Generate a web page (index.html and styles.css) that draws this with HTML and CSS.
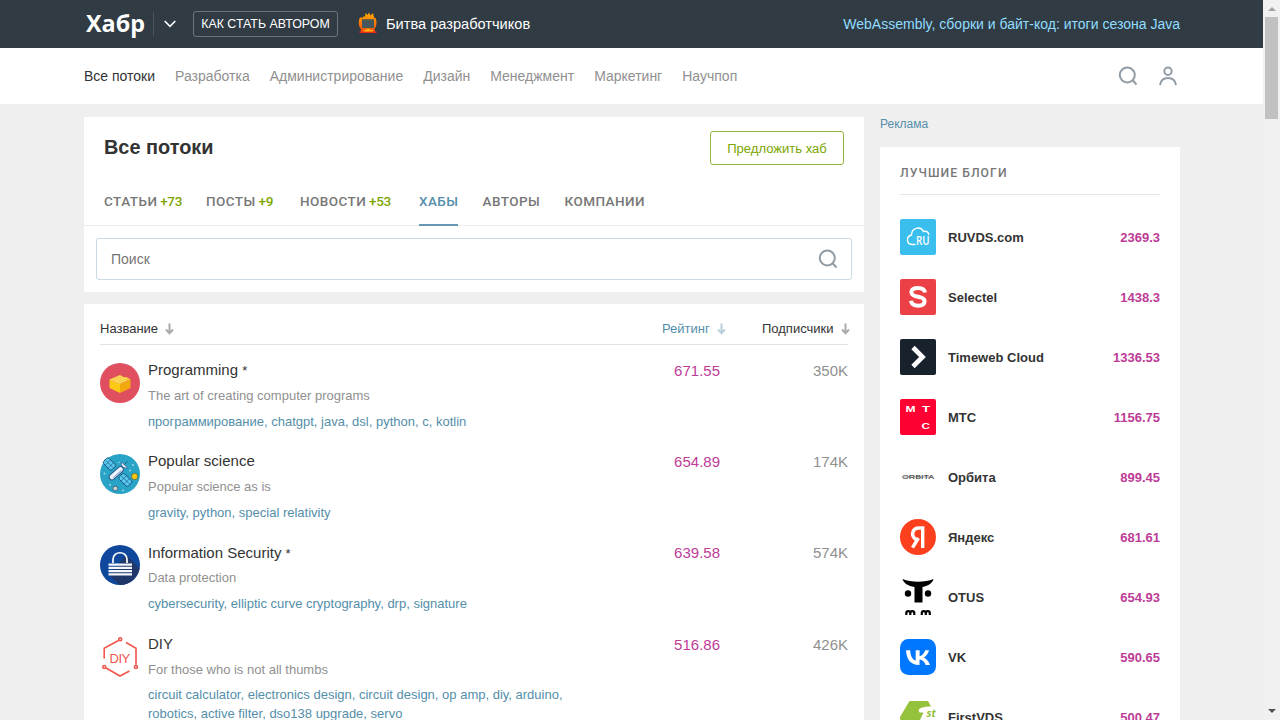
FILE: index.html
```html
<!DOCTYPE html>
<html lang="ru">
<head>
<meta charset="utf-8">
<title>Хабы / Хабр</title>
<link rel="stylesheet" href="styles.css">
</head>
<body>
<div class="window">
<div class="page">
  <header class="topbar">
    <div class="wrap topbar-in">
      <svg class="brand" width="60" height="34" viewBox="0 0 60 34"><text x="0" y="24.500" textLength="59" lengthAdjust="spacingAndGlyphs">Хабр</text></svg>
      <span class="brand-sep"></span>
      <svg class="chev" width="12" height="8" viewBox="0 0 12 8"><path d="M.7 1 6 6.300 11.300 1"/></svg>
      <a class="author">КАК СТАТЬ АВТОРОМ</a>
      <svg class="fire" width="20" height="22" viewBox="0 0 20 22">
        <defs><linearGradient id="f" x1="0" y1="0" x2="0" y2="1"><stop offset="0" stop-color="#ffb000"/><stop offset=".5" stop-color="#fb7a05"/><stop offset="1" stop-color="#f4460b"/></linearGradient></defs>
        <path fill="url(#f)" d="M2.500 21 3 17C.5 15 .3 9 1.500 6.500L3 5l1 1 2-2 1 1 .5-4 2 2L11 .5l1.500 3L15 1l1 4.500 1.500.5c1.500 3 1.500 8-1 11l.8 4z"/>
        <path fill="#46575c" d="M4 7.500h12V16H4z"/><path fill="#6b6143" d="M4 7h12v1.500H4z"/>
        <path fill="#e62b1e" d="M1.500 19.500h17V21h-17z"/><path fill="#ffb60a" d="m5 19 2.500-1 2.500-1.500 2.500 1.500 3 0-1 1.500h-9z"/>
      </svg>
      <a class="battle">Битва разработчиков</a>
      <a class="promo">WebAssembly, сборки и байт-код: итоги сезона Java</a>
    </div>
  </header>
  <nav class="flows">
    <div class="wrap flows-in">
      <a class="on">Все потоки</a><a>Разработка</a><a>Администрирование</a><a>Дизайн</a><a>Менеджмент</a><a>Маркетинг</a><a>Научпоп</a>
      <span class="tools">
        <svg width="20" height="20" viewBox="0 0 20 20"><circle cx="9.300" cy="9" r="7.500"/><path d="m14.300 14 4.200 4.500"/></svg>
        <svg width="20" height="20" viewBox="0 0 20 20"><circle cx="10" cy="5.200" r="3.700"/><path d="M2 19c.7-4.700 3.800-7 8-7s7.300 2.300 8 7"/></svg>
      </span>
    </div>
  </nav>
  <div class="wrap cols">
    <main>
      <section class="card head">
        <div class="title"><h1>Все потоки</h1><a class="suggest">Предложить хаб</a></div>
        <div class="tabs">
          <a>Статьи <b>+73</b></a><a>Посты <b>+9</b></a><a>Новости <b>+53</b></a><a class="on">Хабы</a><a>Авторы</a><a>Компании</a>
        </div>
        <div class="search"><span>Поиск</span>
          <svg width="20" height="20" viewBox="0 0 20 20"><circle cx="9.300" cy="9" r="7.500"/><path d="m14.300 14 4.200 4.500"/></svg>
        </div>
      </section>
      <section class="card hubs">
        <div class="thead">
          <span>Название <svg width="9" height="12" viewBox="0 0 9 12"><path d="M4.500.5v9M1 6.500l3.500 3.700L8 6.500"/></svg></span>
          <span class="sorted">Рейтинг <svg width="9" height="12" viewBox="0 0 9 12"><path d="M4.500.5v9M1 6.500l3.500 3.700L8 6.500"/></svg></span>
          <span>Подписчики <svg width="9" height="12" viewBox="0 0 9 12"><path d="M4.500.5v9M1 6.500l3.500 3.700L8 6.500"/></svg></span>
        </div>
        <article class="hub">
          <svg width="40" height="40" viewBox="0 0 40 40"><circle cx="20" cy="20" r="20" fill="#e04f5f"/><path fill="#ffe06a" d="m9.500 16.500 9.500-4 11.500 3.500-10.500 5z"/><path fill="#fcc916" d="m9.500 16.500 10.500 4.500v9l-10.500-5z"/><path fill="#f2a90f" d="m20 21 10.500-5v9L20 30z"/><g fill="#ffe06a" stroke="#e9ae16" stroke-width=".6"><ellipse cx="15" cy="16" rx="2.300" ry="1.200"/><ellipse cx="20" cy="13.700" rx="2.300" ry="1.200"/><ellipse cx="20.500" cy="17.800" rx="2.300" ry="1.200"/><ellipse cx="25.500" cy="15.500" rx="2.300" ry="1.200"/></g></svg>
          <div class="info"><h2>Programming <i>*</i></h2><p>The art of creating computer programs</p><div class="tags">программирование, chatgpt, java, dsl, python, c, kotlin</div></div>
          <span class="rate">671.55</span><span class="cnt">350K</span>
        </article>
        <article class="hub">
          <svg width="40" height="40" viewBox="0 0 40 40"><circle cx="20" cy="20" r="20" fill="#29a3c6"/><g transform="rotate(45 17 18)"><g fill="#5ac8ee" stroke="#17537d" stroke-width=".9"><rect x="0" y="14" width="12" height="7.500" rx="2"/><rect x="22" y="14" width="13" height="7.500" rx="2"/><path fill="none" stroke-width=".6" d="M0 17.700h12M4 14v7.500M8 14v7.500M22 17.700h13M26.300 14v7.500M30.600 14v7.500"/></g></g><path d="m12 23 8.500-7.500" stroke="#2b568a" stroke-width="6.500" stroke-linecap="round"/><path d="m12 23 8.500-7.500" stroke="#edf6ff" stroke-width="4.700" stroke-linecap="round"/><path d="m13 24 8.500-7.500" stroke="#9fb4d4" stroke-width="1.200"/><path fill="#fff" stroke="#2b568a" stroke-width=".7" d="M21.500 8c-.5 4 2 6.500 6 6z"/><path stroke="#2b568a" d="m24 11 3.500-3.500"/><circle cx="34.700" cy="22.500" r="3.200" fill="#ffc90b" stroke="#4a6455" stroke-width=".8"/><circle cx="15.300" cy="34.500" r="2.500" fill="#c9cfd5" stroke="#376781"/><g fill="#95d8ea"><circle cx="4.500" cy="19.500" r="1"/><circle cx="30" cy="16.500" r="1"/><circle cx="10" cy="31" r="1"/><circle cx="23" cy="36.500" r="1"/><circle cx="33" cy="11" r="1"/><circle cx="19" cy="8.500" r=".8"/></g></svg>
          <div class="info"><h2>Popular science</h2><p>Popular science as is</p><div class="tags">gravity, python, special relativity</div></div>
          <span class="rate">654.89</span><span class="cnt">174K</span>
        </article>
        <article class="hub">
          <svg width="40" height="40" viewBox="0 0 40 40"><circle cx="20" cy="20" r="20" fill="#0e479b"/><path fill="#20376a" d="m26 10 13.500 13.500A20 20 0 0 1 20 40L9 30z"/><path fill="none" stroke="#fff" stroke-width="1.700" d="M13 18v-3.500c0-9 14-9 14 0V18"/><path stroke="#f4f7fb" stroke-width="2.300" d="M8.500 19.700h23.500M8.500 22.900h23.500M8.500 26.100h23.500M8.500 29.300h23.500"/></svg>
          <div class="info"><h2>Information Security <i>*</i></h2><p>Data protection</p><div class="tags">cybersecurity, elliptic curve cryptography, drp, signature</div></div>
          <span class="rate">639.58</span><span class="cnt">574K</span>
        </article>
        <article class="hub">
          <svg width="40" height="40" viewBox="0 0 40 40"><g fill="none" stroke="#f1564f" stroke-width="1.600"><path d="M18.500 3.500 4.200 11.200V21.500M26 5.500l10 5.700v16.500M6 31l14 8 9.500-5"/><circle cx="20.200" cy="2.300" r="1.500"/><circle cx="4.300" cy="30" r="1.500"/><circle cx="35.900" cy="30" r="1.500"/></g><text class="diy" x="9.600" y="25.500" textLength="20.500">DIY</text></svg>
          <div class="info"><h2>DIY</h2><p>For those who is not all thumbs</p><div class="tags">circuit calculator, electronics design, circuit design, op amp, diy, arduino, robotics, active filter, dso138 upgrade, servo</div></div>
          <span class="rate">516.86</span><span class="cnt">426K</span>
        </article>
      </section>
    </main>
    <aside>
      <a class="ad">Реклама</a>
      <section class="card blogs">
        <h3>Лучшие блоги</h3>
        <div class="blog"><svg width="36" height="36" viewBox="0 0 36 36"><rect width="36" height="36" rx="2" fill="#3abeed"/><path fill="none" stroke="#fff" stroke-width="1.400" d="M15.500 25.500h-3c-6 0-7-8-1-9.500 0-7 9-9.500 12-3.500 3-1 5.300 1 5.300 3.500"/><text class="ru" x="16" y="26" textLength="13.500" lengthAdjust="spacingAndGlyphs">RU</text></svg><span>RUVDS.com</span><b>2369.3</b></div>
        <div class="blog"><svg width="36" height="36" viewBox="0 0 36 36"><rect width="36" height="36" rx="2" fill="#ec4046"/><path fill="none" stroke="#fff" stroke-width="4" d="M25 13.500c-.5-3-3-4.500-7-4.500-8 0-8.500 6.500-3 8l5 1.200c7 2 5.500 8.500-1.500 8.500-4.500 0-7-1.500-7.500-5"/></svg><span>Selectel</span><b>1438.3</b></div>
        <div class="blog"><svg width="36" height="36" viewBox="0 0 36 36"><rect width="36" height="36" rx="2" fill="#17222c"/><path fill="none" stroke="#fff" stroke-width="4.700" d="m13 8.500 9.500 9.500-9.500 9.500"/></svg><span>Timeweb Cloud</span><b>1336.53</b></div>
        <div class="blog"><svg width="36" height="36" viewBox="0 0 36 36"><rect width="36" height="36" rx="2" fill="#ff0032"/><g class="mts"><text x="5.500" y="13" textLength="10" lengthAdjust="spacingAndGlyphs">М</text><text x="22" y="13" textLength="8" lengthAdjust="spacingAndGlyphs">Т</text><text x="21.500" y="30" textLength="8.500" lengthAdjust="spacingAndGlyphs">С</text></g></svg><span>МТС</span><b>1156.75</b></div>
        <div class="blog"><svg width="36" height="36" viewBox="0 0 36 36"><text class="orb" x="2" y="20.200" textLength="32" lengthAdjust="spacingAndGlyphs">ORBITA</text><path stroke="#666" stroke-width=".6" d="M4 18h28"/></svg><span>Орбита</span><b>899.45</b></div>
        <div class="blog"><svg width="36" height="36" viewBox="0 0 36 36"><circle cx="18" cy="18" r="18" fill="#fc3f1d"/><path fill="none" stroke="#fff" stroke-width="3.400" d="M22.700 29V9H19c-7 0-8.500 8-3 11.500l2 1M18.500 19l-6 9.700"/></svg><span>Яндекс</span><b>681.61</b></div>
        <div class="blog"><svg width="36" height="36" viewBox="0 0 36 36"><path d="M2.500 0C11 3.500 25 3.500 33.500 0c-.5 3.500-5 7-11 8v15.500h-8V8C8 7 3.500 4 2.500 0z"/><circle cx="8" cy="14.500" r="3.200"/><circle cx="28" cy="14.500" r="3.200"/><path fill="none" stroke="#000" stroke-width="2.200" d="M6.300 36v-2c0-2.500 4-2.500 4 0v2-2c0-2.500 4-2.500 4 0v2M21.800 36v-2c0-2.500 4-2.500 4 0v2-2c0-2.500 4-2.500 4 0v2"/></svg><span>OTUS</span><b>654.93</b></div>
        <div class="blog"><svg width="36" height="36" viewBox="0 0 36 36"><rect width="36" height="36" rx="8.500" fill="#07f"/><path fill="#fff" d="M19 26C11 26 6.300 20.500 6.100 11.200h4.100c.1 6.800 3.100 9.700 5.500 10.300V11.200h3.900v5.900c2.300-.3 4.800-3 5.600-5.900H29c-.6 3.600-3.300 6.200-5.200 7.300 1.900.9 5 3.300 6.100 7.500h-4.200c-.9-2.900-3.200-5.100-6.200-5.400V26z"/></svg><span>VK</span><b>590.65</b></div>
        <div class="blog"><svg width="36" height="36" viewBox="0 0 36 36"><path fill="#95c23d" d="M9.500 2h18.500l3 5.500c-5 0-10.500.5-12.500 3.500l1 2.500h4l-4 8.500 2 10H7L0 20v-2z"/><text class="st" x="26.500" y="18">st</text></svg><span>FirstVDS</span><b>500.47</b></div>
      </section>
    </aside>
  </div>
</div>
<div class="scroll"><i class="up"></i><i class="thumb"></i><i class="down"></i></div>
</div>
</body>
</html>
```
FILE: styles.css
```css
* { box-sizing: border-box; }
body { margin: 0; background: #efefef; font-family: "Liberation Sans", Arial, sans-serif; color: #333; }
h1, h2, h3, p { margin: 0; font-weight: 400; }
svg { display: block; flex: none; }
.window { display: flex; height: 720px; overflow: hidden; }
.page { width: 1263px; height: 720px; overflow: hidden; }
.wrap { width: 1096px; margin-left: 84px; }

.topbar { height: 48px; background: #303b44; }
.topbar-in { display: flex; align-items: center; height: 48px; color: #fff; font-size: 14px; }
.brand { margin-left: 2px; }
.brand text { font: 700 23px "Open Sans", sans-serif; fill: #fff; }
.brand-sep { width: 1px; height: 24px; margin-left: 7px; background: #4a545d; }
.chev { margin-left: 10px; fill: none; stroke: #fff; stroke-width: 1.600; }
.author { margin-left: 17px; width: 145px; height: 26px; border: 1px solid #6b757d; border-radius: 3px; font-size: 12.400px; line-height: 25px; text-align: center; white-space: nowrap; }
.fire { margin: -2px 0 0 20px; }
.battle { margin-left: 8px; font-size: 14.600px; }
.promo { margin-left: auto; color: #90ddff; font-size: 14.030px; }

.flows { height: 56px; background: #fff; }
.flows-in { display: flex; align-items: center; height: 56px; gap: 20px; font-size: 14px; color: #909090; }
.flows-in .on { color: #333; }
.tools { display: flex; gap: 20px; margin-left: auto; margin-right: 2px; }
.tools svg, .search svg { fill: none; stroke: #929ca5; stroke-width: 2; }

.cols { display: flex; gap: 16px; padding-top: 13px; }
main { width: 780px; display: flex; flex-direction: column; gap: 12px; }
.card { background: #fff; }
.head { height: 175px; }
.title { display: flex; justify-content: space-between; padding: 14px 20px 0; }
h1 { font-size: 19.900px; font-weight: 700; line-height: 32px; }
.suggest { width: 134px; height: 34px; border: 1px solid #94b83d; border-radius: 3px; color: #7aa600; font-size: 13.050px; line-height: 33px; text-align: center; }
.tabs { display: grid; grid-template-columns: 102px 94px 119px 63.500px 82px auto; justify-items: start; height: 61px; padding: 0 20px; border-bottom: 1px solid #ececec; color: #777; font: 500 13.500px/50px Roboto, sans-serif; text-transform: uppercase; letter-spacing: .45px; white-space: nowrap; }
.tabs a { height: 61px; padding-top: 11px; }
.tabs b { margin-left: -1px; font-weight: 500; color: #7ea600; letter-spacing: -.3px; }
.tabs .on { color: #548eaa; border-bottom: 2px solid #6797b1; }
.search { display: flex; align-items: center; justify-content: space-between; height: 42px; margin: 12px 12px 0; padding: 0 13px 0 14px; border: 1px solid #c9dae1; border-radius: 3px; color: #757575; font-size: 14px; }

.hubs { padding: 0 16px; height: 430px; }
.thead { display: grid; grid-template-columns: 562px 100px 90px; height: 41px; padding-top: 8px; border-bottom: 1px solid #e3e3e3; font-size: 13px; line-height: 33px; white-space: nowrap; }
.thead span { display: flex; align-items: center; gap: 7px; }
.thead svg { fill: none; stroke: #aaa; stroke-width: 2; }
.thead .sorted { color: #548eaa; }
.thead .sorted svg { stroke: #b9d0dc; }
.hub { display: grid; grid-template-columns: 40px 432px 1fr 120px; column-gap: 8px; height: 91.200px; }
.hub > svg { margin-top: 18px; }
.info { padding-top: 14.200px; }
h2 { font-size: 15px; line-height: 22px; height: 22px; }
h2 i { font-style: normal; font-size: 13px; line-height: 1; }
p { margin-top: 5.800px; font-size: 13px; line-height: 17px; color: #909090; }
.tags { margin-top: 7.800px; font-size: 13px; line-height: 19px; color: #548eaa; }
.rate, .cnt { margin-top: 16px; font-size: 15px; line-height: 20px; text-align: right; }
.rate { color: #bd3c97; }
.cnt { color: #909090; }
.diy { font: 13px "Liberation Sans", sans-serif; fill: #f1564f; }

aside { width: 300px; }
.ad { display: block; height: 30px; font-size: 12px; line-height: 14px; color: #548eaa; }
.blogs { height: 640px; padding: 12px 20px; }
h3 { height: 36px; margin-bottom: 12px; border-bottom: 1px solid #e6e6e6; font: 500 12.200px/28px Roboto, sans-serif; letter-spacing: 1.060px; text-transform: uppercase; color: #777; }
.blog { display: flex; align-items: center; height: 60px; gap: 12px; font-size: 13px; font-weight: 700; }
.blog b { margin-left: auto; color: #bd3c97; }
.ru { font: 600 13px "Open Sans", sans-serif; fill: #fff; }
.mts text { font: 700 9.500px "Liberation Sans", sans-serif; fill: #fff; }
.orb { font: 400 6px "Liberation Sans", sans-serif; fill: #222; }
.st { font: italic 700 10.500px "Open Sans", sans-serif; fill: #95c23d; }

.scroll { width: 17px; background: #f1f1f1; display: flex; flex-direction: column; align-items: center; }
.scroll .up { margin-top: 7px; border: 4px solid transparent; border-top: 0; border-bottom-color: #a3a3a3; }
.scroll .thumb { width: 13px; height: 102px; margin-top: 6px; background: #c1c1c1; }
.scroll .down { margin: auto 0 7px; border: 4px solid transparent; border-bottom: 0; border-top-color: #505050; }
```
